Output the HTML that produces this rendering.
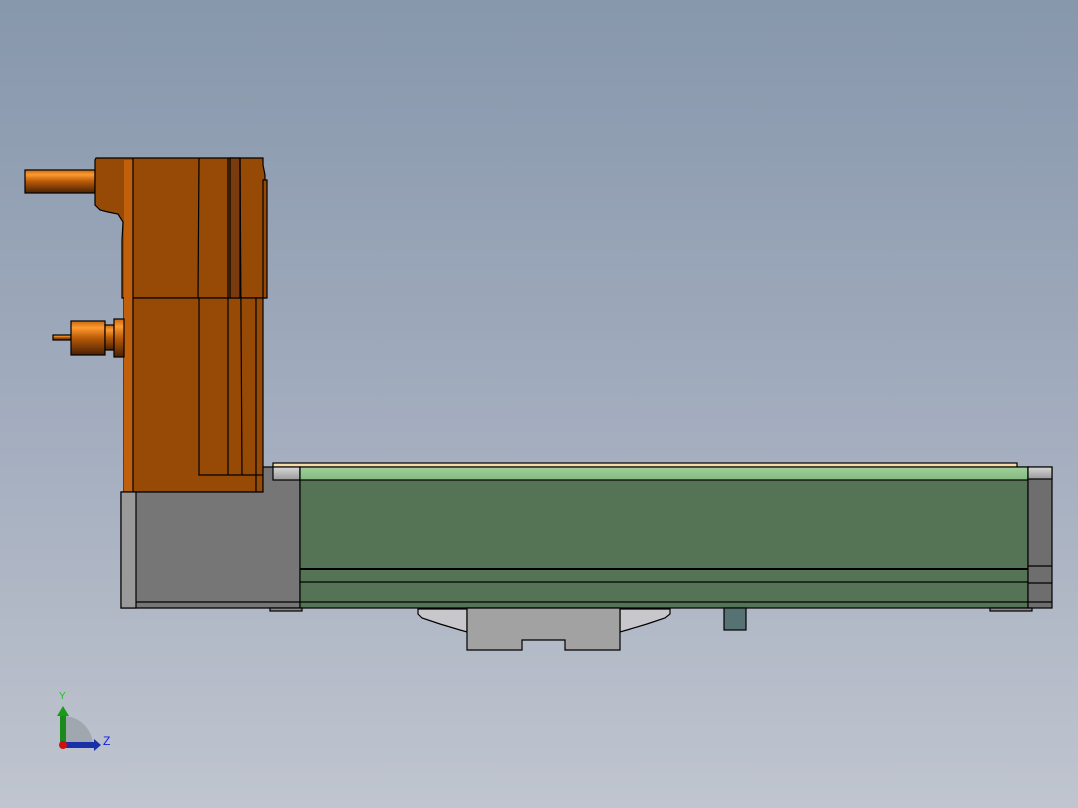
<!DOCTYPE html>
<html><head><style>
html,body{margin:0;padding:0;width:1078px;height:808px;overflow:hidden}
body{background:linear-gradient(#8797ac,#a4aebf 55%,#c0c5cf)}
svg{position:absolute;left:0;top:0}
</style></head><body>
<svg width="1078" height="808" viewBox="0 0 1078 808">
<defs>
<linearGradient id="cyl" x1="0" y1="0" x2="0" y2="1">
<stop offset="0" stop-color="#c86a10"/><stop offset=".2" stop-color="#ff9a30"/><stop offset=".5" stop-color="#b85a08"/><stop offset="1" stop-color="#4a2004"/></linearGradient>
<linearGradient id="lg" x1="0" y1="0" x2="0" y2="1"><stop offset="0" stop-color="#a0d09c"/><stop offset="1" stop-color="#84b880"/></linearGradient>
<linearGradient id="gy" x1="0" y1="0" x2="0" y2="1"><stop offset="0" stop-color="#d8d8d8"/><stop offset="1" stop-color="#9a9a9a"/></linearGradient>
</defs>
<g stroke="#000" stroke-width="1.2">
<!-- shaft top -->
<rect x="25" y="170" width="70" height="23" fill="url(#cyl)"/>
<!-- upper block -->
<path d="M96,158 H263 V165 L265,175 V298 H122 V240 L123,222 L118,214 L108,212 L100,210 L95,205 V160 Z" fill="#964a06"/>
<rect x="263" y="180" width="4" height="118" fill="#964a06"/>
<!-- lower block -->
<rect x="124" y="298" width="139" height="194" fill="#964a06"/>
<rect x="124" y="160" width="9" height="332" fill="#c0600c" stroke="none"/>
<line x1="133" y1="158" x2="133" y2="492"/>
<line x1="199" y1="158" x2="198" y2="298"/>
<path d="M199,298 V475 H263" fill="none"/>
<rect x="230" y="158" width="10" height="140" fill="#7a3c0e"/>
<line x1="228" y1="158" x2="228" y2="475"/>
<line x1="240" y1="158" x2="242" y2="475"/>
<line x1="256" y1="298" x2="256" y2="492"/>
<!-- shaft 2 -->
<rect x="53" y="335" width="18" height="5" fill="url(#cyl)"/>
<rect x="71" y="321" width="34" height="34" fill="url(#cyl)"/>
<rect x="105" y="325" width="9" height="25" fill="url(#cyl)"/>
<rect x="114" y="319" width="10" height="38" fill="url(#cyl)"/>
<!-- yellow strip -->
<rect x="273" y="463" width="744" height="5" fill="#f8dca8"/>
<!-- gray base -->
<path d="M121,492 H263 V467 H300 V608 H121 Z" fill="#767676"/>
<rect x="121" y="492" width="15" height="116" fill="#9a9a9a"/>
<rect x="273" y="467" width="27" height="13" fill="url(#gy)"/>
<line x1="136" y1="602" x2="300" y2="602"/>
<!-- green -->
<rect x="300" y="467" width="728" height="141" fill="#557455"/>
<rect x="300" y="467" width="728" height="13" fill="url(#lg)"/>
<line x1="300" y1="569" x2="1028" y2="569" stroke-width="2"/>
<line x1="300" y1="582" x2="1028" y2="582"/>
<line x1="300" y1="602" x2="1028" y2="602"/>
<!-- end cap -->
<rect x="1028" y="467" width="24" height="141" fill="#6e6e6e"/>
<rect x="1028" y="467" width="24" height="12" fill="url(#gy)"/>
<line x1="1028" y1="566" x2="1052" y2="566"/>
<line x1="1028" y1="583" x2="1052" y2="583"/>
<line x1="1028" y1="602" x2="1052" y2="602"/>
<!-- feet -->
<rect x="270" y="608" width="32" height="3" fill="#888"/>
<rect x="990" y="608" width="42" height="3" fill="#888"/>
<!-- bracket -->
<path d="M418,609 H467 V632 L460,630 L440,624 L422,618 L418,614 Z" fill="#c8c8cc"/>
<path d="M670,609 H620 V632 L627,630 L647,624 L665,618 L670,614 Z" fill="#c8c8cc"/>
<path d="M467,608 H620 V650 H565 V640 H522 V650 H467 Z" fill="#a2a2a2"/>
<rect x="724" y="608" width="22" height="22" fill="#577272"/>
</g>
<!-- triad -->
<path d="M63,746 V716 A30,30 0 0 1 93,746 Z" fill="#9aa0a8" opacity=".8"/>
<rect x="60" y="714" width="6" height="32" fill="#1a8a1a"/>
<path d="M57,716 L63,706 L69,716 Z" fill="#1a9a1a"/>
<rect x="63" y="742" width="32" height="6" fill="#1a30a8"/>
<path d="M94,739 L101,745 L94,751 Z" fill="#1a30a8"/>
<circle cx="63" cy="745" r="4" fill="#d01010"/>
<text x="59" y="699" font-family="Liberation Sans,sans-serif" font-size="10" fill="#20c020">Y</text>
<text x="103" y="745" font-family="Liberation Sans,sans-serif" font-size="12" fill="#1020e0">Z</text>
</svg>
</body></html>
